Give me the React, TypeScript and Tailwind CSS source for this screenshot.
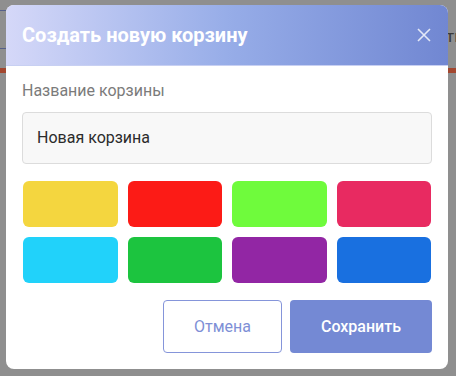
import React from "react";

const colors = [
    "#f4d63f", "#fc1b16", "#6ffb3c", "#e82a61",
    "#21d2fa", "#1cc43f", "#9226a4", "#1970e0",
];

export default function App() {
    return (
        <div
            className="relative h-[376px] w-[456px] overflow-hidden bg-[#8f8f8f]"
            style={{ fontFamily: "Roboto, 'Noto Sans', sans-serif" }}
        >
            {/* page behind the overlay */}
            <div className="absolute left-0 top-[10px] h-px w-[6px] bg-[#56608a]" />
            <div className="absolute left-0 top-[48px] h-px w-[6px] bg-[#56608a]" />
            <div className="absolute left-0 top-[68px] h-[5px] w-full bg-[#a3472f]" />
            <div className="absolute left-[446px] top-[24px] text-[17px] text-[#3a3a3a]">ть</div>

            <div className="relative pl-[6px] pt-[5px]">
                <div className="w-[442px] overflow-hidden rounded-[8px] bg-white">
                    <div className="flex h-[61px] items-center justify-between border-b border-[#c8d0f2] bg-gradient-to-r from-[#d5d8f8] via-[#97ade8] to-[#7187d2] pl-4 pr-[17px]">
                        <h2 className="text-[20px] font-bold text-white">Создать новую корзину</h2>
                        <svg width="14" height="14" viewBox="0 0 14 14" className="text-white/80">
                            <path d="M1 1L13 13M13 1L1 13" stroke="currentColor" strokeWidth="1.6" />
                        </svg>
                    </div>
                    <div className="px-4 pb-4 pt-[15px]">
                        <label className="block text-[16px] leading-5 text-[#7b7b7b]">Название корзины</label>
                        <div className="mt-[11px] flex h-[52px] items-center rounded-[4px] border border-[#dcdcdc] bg-[#f8f8f8] px-[14px] text-[16px] text-[#2b2b2b]">
                            Новая корзина
                        </div>
                        <div className="mt-[17px] grid grid-cols-4 gap-[10px] px-px">
                            {colors.map((c) => (
                                <div key={c} className="h-[46px] rounded-[6px]" style={{ backgroundColor: c }} />
                            ))}
                        </div>
                        <div className="mt-[17px] flex justify-end gap-2">
                            <button className="h-[53px] w-[119px] rounded-[4px] border border-[#8595da] bg-white text-[16px] text-[#7e8fd6]">
                                Отмена
                            </button>
                            <button className="h-[53px] w-[142px] rounded-[4px] bg-[#7489d4] text-[16px] font-medium text-white">
                                Сохранить
                            </button>
                        </div>
                    </div>
                </div>
            </div>
        </div>
    );
}
